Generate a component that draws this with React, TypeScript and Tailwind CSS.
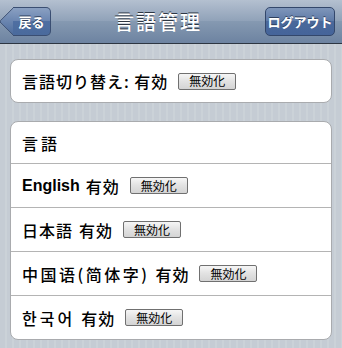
const rows = [
  { label: "English", kind: "latin" },
  { label: "日本語", kind: "ja" },
  { label: "中国语(简体字)", kind: "zh" },
  { label: "한국어", kind: "ko" },
];

const DisableButton = () => (
  <button className="ml-[10px] h-[17px] w-[58px] rounded-[2px] border border-[#707070] bg-[linear-gradient(#f6f6f6,#e2e2e2_50%,#d4d4d4)] text-[12px] leading-none font-normal tracking-normal text-black">
    無効化
  </button>
);

export default function App() {
  return (
    <div
      className="flex h-[348px] w-[342px] flex-col bg-[repeating-linear-gradient(90deg,#c5ccd4_0px,#c5ccd4_5px,#cbd2d8_5px,#cbd2d8_7px)]"
      style={{ fontFamily: '"Noto Sans CJK JP", "Noto Sans CJK KR", sans-serif' }}
    >
      {/* Header */}
      <div className="flex h-[44px] shrink-0 items-center justify-between border-b border-[#2d3642] bg-[linear-gradient(#b4c0d0,#8fa1b8_50%,#8599b1_50%,#6d83a1)] pr-[7px] pl-[5px]">
        <div className="relative ml-[8px] flex h-[29px] w-[38px] items-center">
          <div className="absolute top-[4px] left-[-10px] h-[21px] w-[21px] rotate-45 rounded-[2px] border-b border-l border-[#3a4e72] bg-[linear-gradient(135deg,#8aa0c2,#4a6a9c)]" />
          <div className="relative flex h-full w-full items-center justify-center rounded-r-[5px] border-y border-r border-[#3a4e72] bg-[linear-gradient(#8aa0c2,#6a85b0_50%,#4f6fa2_50%,#4a6a9c)] text-[13px] font-bold text-white [text-shadow:0_-1px_0_#2f3f5c]">
            戻る
          </div>
        </div>
        <div className="text-[20px] font-medium tracking-[2px] text-white [text-shadow:0_-1px_0_#2d3642]">
          言語管理
        </div>
        <div className="flex h-[29px] w-[70px] items-center justify-center rounded-[5px] border border-[#33476b] bg-[linear-gradient(#7f96ba,#5d79a6_50%,#4a699b_50%,#45649a)] text-[13px] font-bold text-white [text-shadow:0_-1px_0_#2f3f5c]">
          ログアウト
        </div>
      </div>

      {/* Toggle card */}
      <div className="mx-[10px] mt-[15px] flex h-[44px] items-center rounded-[8px] border border-[#a9abae] bg-white pl-[11px] text-[16px] font-medium tracking-[1px] text-black">
        <span>言語切り替え: 有効</span>
        <DisableButton />
      </div>

      {/* Language list */}
      <div className="mx-[10px] mt-[18px] flex flex-col rounded-[8px] border border-[#a9abae] bg-white text-[16px] font-medium tracking-[1px] text-black">
        <div className="flex h-[41px] items-center pl-[11px] tracking-[3px]">言語</div>
        {rows.map((r) => (
          <div
            key={r.label}
            className="flex h-[44px] items-center border-t border-[#b4b4b4] pl-[11px]"
          >
            <span
              className={
                r.kind === "latin"
                  ? "font-bold tracking-normal"
                  : r.kind === "ko"
                    ? "tracking-[3px]"
                    : r.kind === "zh"
                      ? "tracking-[2.5px]"
                      : ""
              }
              style={
                r.kind === "latin"
                  ? { fontFamily: '"Liberation Sans", Arial, sans-serif' }
                  : undefined
              }
            >
              {r.label}
            </span>
            <span className="ml-[6px]">有効</span>
            <DisableButton />
          </div>
        ))}
      </div>
    </div>
  );
}
